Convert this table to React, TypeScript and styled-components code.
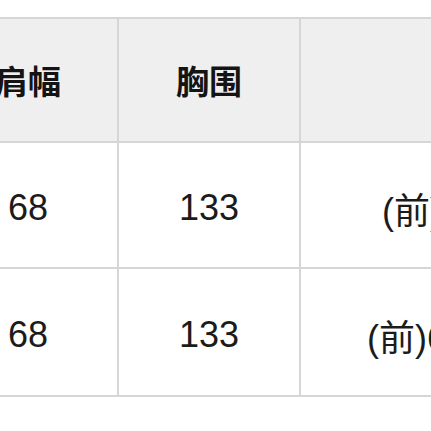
import styled, { createGlobalStyle } from 'styled-components';

const GlobalStyle = createGlobalStyle`
  html, body {
    margin: 0;
    padding: 0;
    background: #ffffff;
    overflow: hidden;
  }
  body {
    font-family: 'Liberation Sans', 'Noto Sans CJK SC', sans-serif;
    color: #1b1b1b;
  }
`;

const Wrap = styled.div`
  width: 431px;
  height: 431px;
  overflow: hidden;
  padding-top: 17px;
  box-sizing: border-box;
`;

const Table = styled.table`
  margin-left: -63px;
  border-collapse: collapse;
  table-layout: fixed;
  width: 736px;
`;

const HeadCell = styled.th`
  height: 122px;
  padding: 0;
  border: 2px solid #d6d6d6;
  background: #efefef;
  font-family: 'Noto Sans CJK SC', sans-serif;
  font-size: 33px;
  font-weight: 700;
  color: #141414;
  text-align: center;
  vertical-align: middle;
`;

const Cell = styled.td<{ $h: number }>`
  height: ${(p) => p.$h}px;
  padding: 5px 0 0;
  border: 2px solid #d6d6d6;
  font-size: 36px;
  text-align: center;
  vertical-align: middle;
  white-space: nowrap;
  box-sizing: border-box;
`;

const rows = [
  { shoulder: '68', chest: '133', length: '(前)66 (后)70', h: 126 },
  { shoulder: '68', chest: '133', length: '(前)66.5 (后)70', h: 128 },
];

const App = () => {
  return (
    <Wrap>
      <GlobalStyle />
      <Table>
        <colgroup>
          <col style={{ width: 180 }} />
          <col style={{ width: 182 }} />
          <col style={{ width: 374 }} />
        </colgroup>
        <thead>
          <tr>
            <HeadCell>肩幅</HeadCell>
            <HeadCell>胸围</HeadCell>
            <HeadCell>衣长</HeadCell>
          </tr>
        </thead>
        <tbody>
          {rows.map((r, i) => (
            <tr key={i}>
              <Cell $h={r.h}>{r.shoulder}</Cell>
              <Cell $h={r.h}>{r.chest}</Cell>
              <Cell $h={r.h}>{r.length}</Cell>
            </tr>
          ))}
        </tbody>
      </Table>
    </Wrap>
  );
};

export default App;
